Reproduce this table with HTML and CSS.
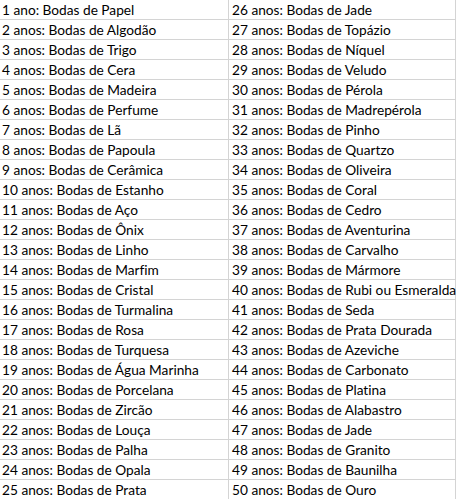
FILE: index.html
```html
<!DOCTYPE html>
<html lang="pt">
<head>
<meta charset="utf-8">
<link rel="stylesheet" href="styles.css">
</head>
<body>
<div class="sheet">
<div class="cell c1">1 ano: Bodas de Papel</div><div class="cell c2">26 anos: Bodas de Jade</div>
<div class="cell c1">2 anos: Bodas de Algodão</div><div class="cell c2">27 anos: Bodas de Topázio</div>
<div class="cell c1">3 anos: Bodas de Trigo</div><div class="cell c2">28 anos: Bodas de Níquel</div>
<div class="cell c1">4 anos: Bodas de Cera</div><div class="cell c2">29 anos: Bodas de Veludo</div>
<div class="cell c1">5 anos: Bodas de Madeira</div><div class="cell c2">30 anos: Bodas de Pérola</div>
<div class="cell c1">6 anos: Bodas de Perfume</div><div class="cell c2">31 anos: Bodas de Madrepérola</div>
<div class="cell c1">7 anos: Bodas de Lã</div><div class="cell c2">32 anos: Bodas de Pinho</div>
<div class="cell c1">8 anos: Bodas de Papoula</div><div class="cell c2">33 anos: Bodas de Quartzo</div>
<div class="cell c1">9 anos: Bodas de Cerâmica</div><div class="cell c2">34 anos: Bodas de Oliveira</div>
<div class="cell c1">10 anos: Bodas de Estanho</div><div class="cell c2">35 anos: Bodas de Coral</div>
<div class="cell c1">11 anos: Bodas de Aço</div><div class="cell c2">36 anos: Bodas de Cedro</div>
<div class="cell c1">12 anos: Bodas de Ônix</div><div class="cell c2">37 anos: Bodas de Aventurina</div>
<div class="cell c1">13 anos: Bodas de Linho</div><div class="cell c2">38 anos: Bodas de Carvalho</div>
<div class="cell c1">14 anos: Bodas de Marfim</div><div class="cell c2">39 anos: Bodas de Mármore</div>
<div class="cell c1">15 anos: Bodas de Cristal</div><div class="cell c2">40 anos: Bodas de Rubi ou Esmeralda</div>
<div class="cell c1">16 anos: Bodas de Turmalina</div><div class="cell c2">41 anos: Bodas de Seda</div>
<div class="cell c1">17 anos: Bodas de Rosa</div><div class="cell c2">42 anos: Bodas de Prata Dourada</div>
<div class="cell c1">18 anos: Bodas de Turquesa</div><div class="cell c2">43 anos: Bodas de Azeviche</div>
<div class="cell c1">19 anos: Bodas de Água Marinha</div><div class="cell c2">44 anos: Bodas de Carbonato</div>
<div class="cell c1">20 anos: Bodas de Porcelana</div><div class="cell c2">45 anos: Bodas de Platina</div>
<div class="cell c1">21 anos: Bodas de Zircão</div><div class="cell c2">46 anos: Bodas de Alabastro</div>
<div class="cell c1">22 anos: Bodas de Louça</div><div class="cell c2">47 anos: Bodas de Jade</div>
<div class="cell c1">23 anos: Bodas de Palha</div><div class="cell c2">48 anos: Bodas de Granito</div>
<div class="cell c1">24 anos: Bodas de Opala</div><div class="cell c2">49 anos: Bodas de Baunilha</div>
<div class="cell c1">25 anos: Bodas de Prata</div><div class="cell c2">50 anos: Bodas de Ouro</div>
</div>
</body>
</html>
```
FILE: styles.css
```css
html, body {
  margin: 0;
  padding: 0;
  background: #ffffff;
}
body {
  font-family: Lato, "Open Sans", sans-serif;
  font-size: 13.7px;
  font-variant-ligatures: none;
  color: #000000;
  overflow: hidden;
}
.sheet {
  display: grid;
  grid-template-columns: 229px 227px;
  grid-auto-rows: 20px;
}
.cell {
  box-sizing: border-box;
  border-bottom: 1px solid #d4d4d4;
  border-right: 1px solid #d4d4d4;
  line-height: 19px;
  white-space: nowrap;
  overflow: visible;
}
.c1 {
  padding-left: 2px;
}
.c2 {
  padding-left: 3px;
}
```
